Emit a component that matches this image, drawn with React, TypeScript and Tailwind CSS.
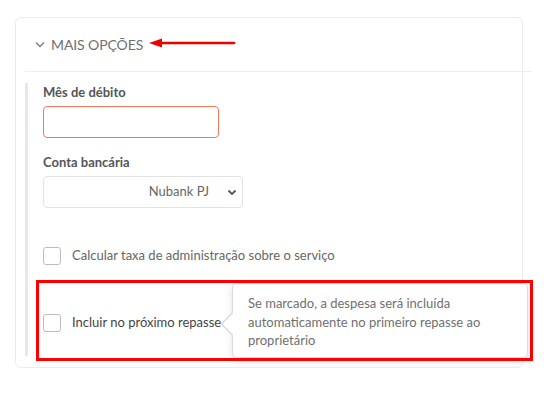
import React from "react";

export default function App() {
  return (
    <div
      className="relative w-[544px] h-[403px] bg-white pt-[17px] pl-[15px]"
      style={{ fontFamily: "Lato, 'Noto Sans', sans-serif" }}
    >
      <div className="w-[508px] h-[351px] border border-[#ececec] rounded-[6px]">
        <div className="h-[53px] flex items-center pl-[19px] text-[#707070]">
          <svg width="10" height="7" viewBox="0 0 10 7" className="mt-[-1px]">
            <path d="M1 1.5 L5 5.5 L9 1.5" fill="none" stroke="#7a7a7a" strokeWidth="1.3" />
          </svg>
          <span className="ml-[6px] text-[14px] leading-none tracking-[-0.1px]">MAIS OPÇÕES</span>
        </div>
        <div className="ml-[9px] w-[507px] h-px bg-[#eeeeee]" />
        <div className="mt-[11px] ml-[9px] h-[273px] border-l-[3px] border-[#e8e8e8] pl-[15px]">
          <div className="text-[13px] leading-[18px] font-bold text-[#555]">Mês de débito</div>
          <div className="mt-[5px] w-[176px] h-[32px] border border-[#f4795a] rounded-[4px]" />
          <div className="mt-[15px] text-[13px] leading-[18px] font-bold text-[#555]">Conta bancária</div>
          <div className="mt-[5px] w-[200px] h-[32px] border border-[#e2e2e2] rounded-[4px] flex items-center justify-end pr-[5px]">
            <span className="text-[13px] text-[#666]">Nubank PJ</span>
            <svg width="10" height="7" viewBox="0 0 10 7" className="ml-[18px]">
              <path d="M1.5 1.5 L5 5 L8.5 1.5" fill="none" stroke="#555" strokeWidth="1.8" />
            </svg>
          </div>
          <div className="mt-[39px] flex items-center h-[18px]">
            <div className="w-[18px] h-[18px] border border-[#bdbdbd] rounded-[3px] bg-white" />
            <span className="ml-[11px] text-[13px] text-[#666]">Calcular taxa de administração sobre o serviço</span>
          </div>
          <div className="mt-[49px] flex items-center h-[18px]">
            <div className="w-[18px] h-[18px] border border-[#bdbdbd] rounded-[3px] bg-white" />
            <span className="ml-[11px] text-[13px] text-[#444]">Incluir no próximo repasse</span>
          </div>
        </div>
      </div>

      {/* tooltip */}
      <div className="absolute left-[232px] top-[283px] w-[296px] h-[75px] bg-white border border-[#dcdcdc] rounded-[5px] shadow-[0_3px_8px_rgba(0,0,0,0.12)] pl-[15px] pt-[10px] text-[13px] leading-[18.5px] text-[#707070]">
        <div className="absolute left-[-9px] top-[32px] w-[16px] h-[16px] bg-white border-l border-b border-[#d0d0d0] rotate-45" />
        <div className="relative">
          Se marcado, a despesa será incluída
          <br />
          automaticamente no primeiro repasse ao
          <br />
          proprietário
        </div>
      </div>

      {/* annotation box */}
      <div className="absolute left-[36px] top-[280px] w-[497px] h-[81px] border-[3px] border-[#ff0000]" />

      {/* annotation arrow */}
      <svg className="absolute left-[146px] top-[37px]" width="92" height="12" viewBox="0 0 92 12">
        <path d="M14 6 L88 6" stroke="#ee0000" strokeWidth="2.6" strokeLinecap="round" />
        <path d="M3 6 L16 1.5 L16 10.5 Z" fill="#ee0000" />
      </svg>
    </div>
  );
}
